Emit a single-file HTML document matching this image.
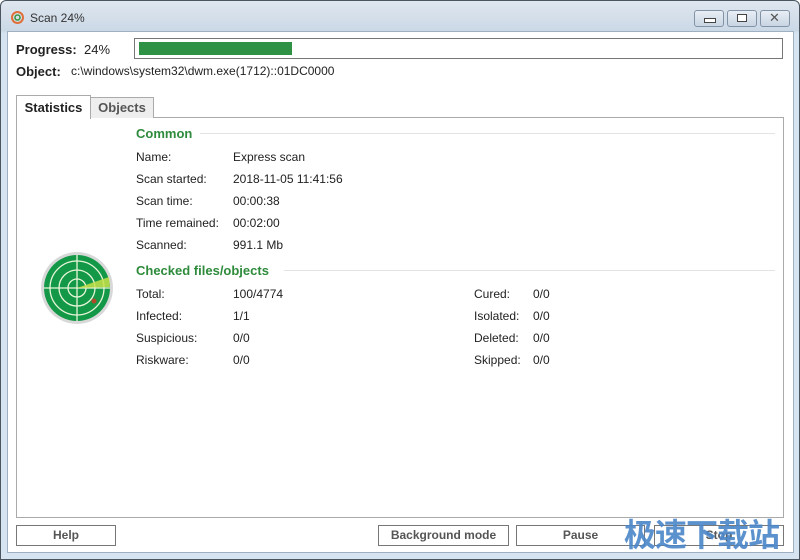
<!DOCTYPE html><html><head><style>
body{margin:0;width:800px;height:560px;overflow:hidden;font-family:"Liberation Sans","DejaVu Sans",sans-serif;font-size:12px;color:#222;}
.win{position:absolute;left:0;top:0;width:798px;height:558px;border:1px solid #4a5560;background:linear-gradient(#dfe7ef,#cbd8e6 30px,#d6e3f1 32px);border-radius:6px 6px 0 0}
.client{position:absolute;left:7px;top:31px;width:785px;height:520px;background:#fff;border:1px solid #9fb0c2}
.a{position:absolute;white-space:nowrap}
.tb{position:absolute;top:10px;width:28px;height:15px;border:1px solid #8393a6;border-radius:3px;background:linear-gradient(#e8eef5,#c9d5e3)}
.btn{position:absolute;top:525px;height:19px;border:1px solid #777;background:#fff;text-align:center;line-height:19px;font-size:12px;font-weight:bold;color:#555}
.g{color:#2e8b3c;font-weight:bold;font-size:13px}
.ln{position:absolute;height:1px;background:#e3e3e3}
</style></head><body>
<div class="win"></div>
<div class="client"></div>
<svg class="a" style="left:11px;top:11px" width="13" height="13" viewBox="0 0 13 13"><circle cx="6.5" cy="6.5" r="5.5" fill="none" stroke="#e0703a" stroke-width="2"/><circle cx="6.5" cy="6.5" r="2.5" fill="none" stroke="#3a9a45" stroke-width="1.6"/></svg>
<div class="a" style="left:30px;top:11px;font-size:12px;color:#333">Scan 24%</div>
<div class="tb" style="left:694px"><div style="position:absolute;left:9px;top:7px;width:10px;height:3px;border:1px solid #444;background:#fff"></div></div>
<div class="tb" style="left:727px"><div style="position:absolute;left:9px;top:3px;width:8px;height:6px;border:1px solid #444;background:#fff"></div></div>
<div class="tb" style="left:760px"><div style="position:absolute;left:8px;top:-1px;font-size:13px;font-weight:bold;color:#555">✕</div></div>
<div class="a" style="left:16px;top:42px;font-weight:bold;font-size:13px">Progress:</div>
<div class="a" style="left:84px;top:42px;font-size:13px">24%</div>
<div class="a" style="left:134px;top:38px;width:647px;height:19px;border:1px solid #777"></div>
<div class="a" style="left:139px;top:42px;width:153px;height:13px;background:#2f9143"></div>
<div class="a" style="left:16px;top:64px;font-weight:bold;font-size:13px">Object:</div>
<div class="a" style="left:71px;top:64px;font-size:12px">c:\windows\system32\dwm.exe(1712)::01DC0000</div>
<div class="a" style="left:16px;top:117px;width:766px;height:399px;border:1px solid #aaa"></div>
<div class="a" style="left:16px;top:95px;width:73px;height:23px;border:1px solid #aaa;border-bottom:none;background:#fff;font-weight:bold;font-size:13px;text-align:center;line-height:23px">Statistics</div>
<div class="a" style="left:90px;top:97px;width:62px;height:20px;border:1px solid #aaa;border-bottom:none;background:#eee;font-weight:bold;font-size:13px;text-align:center;line-height:20px;color:#555">Objects</div>
<svg class="a" style="left:40px;top:251px" width="74" height="74" viewBox="0 0 74 74"><circle cx="37" cy="37" r="36" fill="#d8d8d8"/><circle cx="37" cy="37" r="33" fill="#129847"/><g fill="none" stroke="#e8f5d8" stroke-width="1.3"><circle cx="37" cy="37" r="27"/><circle cx="37" cy="37" r="18"/><circle cx="37" cy="37" r="9"/><path d="M37 4V70M4 37H70"/></g><path d="M37 37L69 26L70 36Z" fill="#c8e04a" opacity=".85"/><circle cx="54" cy="50" r="2.5" fill="#b04a2a"/></svg>
<div class="a g" style="left:136px;top:126px">Common</div><div class="ln" style="left:200px;top:133px;width:575px"></div>
<div class="a" style="left:136px;top:150px">Name:</div><div class="a" style="left:233px;top:150px">Express scan</div>
<div class="a" style="left:136px;top:172px">Scan started:</div><div class="a" style="left:233px;top:172px">2018-11-05 11:41:56</div>
<div class="a" style="left:136px;top:194px">Scan time:</div><div class="a" style="left:233px;top:194px">00:00:38</div>
<div class="a" style="left:136px;top:216px">Time remained:</div><div class="a" style="left:233px;top:216px">00:02:00</div>
<div class="a" style="left:136px;top:238px">Scanned:</div><div class="a" style="left:233px;top:238px">991.1 Mb</div>
<div class="a g" style="left:136px;top:263px">Checked files/objects</div><div class="ln" style="left:284px;top:270px;width:491px"></div>
<div class="a" style="left:136px;top:287px">Total:</div><div class="a" style="left:233px;top:287px">100/4774</div>
<div class="a" style="left:136px;top:309px">Infected:</div><div class="a" style="left:233px;top:309px">1/1</div>
<div class="a" style="left:136px;top:331px">Suspicious:</div><div class="a" style="left:233px;top:331px">0/0</div>
<div class="a" style="left:136px;top:353px">Riskware:</div><div class="a" style="left:233px;top:353px">0/0</div>
<div class="a" style="left:474px;top:287px">Cured:</div><div class="a" style="left:533px;top:287px">0/0</div>
<div class="a" style="left:474px;top:309px">Isolated:</div><div class="a" style="left:533px;top:309px">0/0</div>
<div class="a" style="left:474px;top:331px">Deleted:</div><div class="a" style="left:533px;top:331px">0/0</div>
<div class="a" style="left:474px;top:353px">Skipped:</div><div class="a" style="left:533px;top:353px">0/0</div>
<div class="btn" style="left:16px;width:98px">Help</div>
<div class="btn" style="left:378px;width:129px">Background mode</div>
<div class="btn" style="left:516px;width:127px">Pause</div>
<div class="btn" style="left:654px;width:128px">Stop</div>
<div class="a" style="left:624px;top:510px;font-family:'Noto Sans CJK SC',sans-serif;font-size:32px;font-weight:bold;color:#4a86c8;letter-spacing:-1px;opacity:.9">极速下载站</div>
</body></html>
